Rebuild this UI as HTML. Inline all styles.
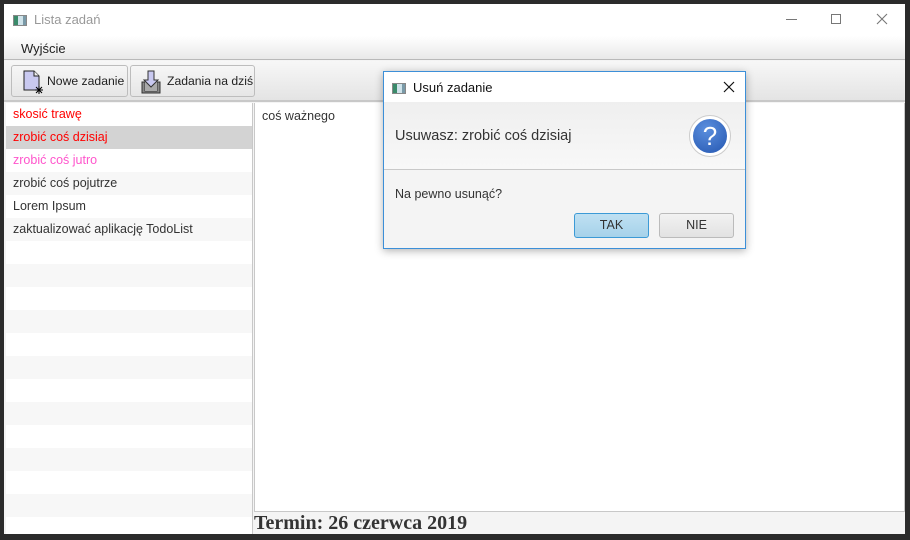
<!DOCTYPE html>
<html><head><meta charset="utf-8"><style>
*{margin:0;padding:0;box-sizing:border-box}
body{width:910px;height:540px;background:#2b2b2b;position:relative;overflow:hidden;font-family:"Liberation Sans",sans-serif;font-size:12.5px;color:#333;white-space:nowrap}
.abs{position:absolute}
.win{left:4px;top:4px;width:901px;height:530px;background:#f4f4f4}
.tb{left:0;top:0;width:901px;height:32px;background:#fff}
.menu{left:0;top:32px;width:901px;height:24px;background:linear-gradient(#fff,#e9e9e9);border-bottom:1px solid #b9b9b9}
.tool{left:0;top:57px;width:901px;height:41px;background:linear-gradient(#f7f7f7,#e4e4e4);border-bottom:2px solid #c8c8c8}
.btn{top:4px;height:32px;border:1px solid #bdbdbd;border-radius:3px;background:linear-gradient(#f6f6f6,#e6e6e6);font-size:12.2px;color:#222;line-height:30px}
.row{left:0;width:246px;height:23px;line-height:23px;padding-left:7px;font-size:12.5px}
.ic{display:inline-block;width:14px;height:11px;background:linear-gradient(90deg,#3a8a6a 0 35%,#cfe3ea 35% 75%,#7a9aa8 75%);border:1px solid #888;vertical-align:middle}
</style></head><body>
<div class="abs win">
 <div class="abs tb">
  <div class="abs" style="left:9px;top:9px"><span class="ic"></span></div>
  <div class="abs" style="left:30px;top:8px;color:#999;font-size:13px">Lista zadań</div>
  <div class="abs" style="left:782px;top:15px;width:11px;height:1px;background:#777"></div>
  <div class="abs" style="left:827px;top:10px;width:10px;height:10px;border:1px solid #777"></div>
  <svg class="abs" style="left:872px;top:9px" width="12" height="12"><path d="M1 1L11 11M11 1L1 11" stroke="#777" stroke-width="1.1"/></svg>
 </div>
 <div class="abs menu"><div class="abs" style="left:17px;top:5px;font-size:13px;color:#222">Wyjście</div></div>
 <div class="abs tool">
  <div class="abs btn" style="left:7px;width:117px">
   <svg class="abs" style="left:10px;top:4px" width="22" height="24"><path d="M2 1H12L17 6V20H2Z" fill="#c9c9f0" stroke="#222"/><path d="M12 1V6H17" fill="#eee" stroke="#222"/><path d="M17 16V24M13 20H21M14 17L20 23M20 17L14 23" stroke="#000"/></svg>
   <span class="abs" style="left:35px;top:0">Nowe zadanie</span></div>
  <div class="abs btn" style="left:126px;width:125px">
   <svg class="abs" style="left:9px;top:4px" width="22" height="24"><path d="M2 12H5V21H17V12H20V23H2Z" fill="#888" stroke="#333"/><path d="M5 12H17V21H5Z" fill="#aaa"/><path d="M8 1H14V10H18L11 17L4 10H8Z" fill="#c9c9f0" stroke="#333"/></svg>
   <span class="abs" style="left:36px;top:0">Zadania na dziś</span></div>
 </div>
 <div class="abs" style="left:2px;top:99px;width:247px;height:431px;background:#fff;border-right:1px solid #c8c8c8;overflow:hidden">
  <div class="abs row" style="top:0;color:#f00;background:#fff">skosić trawę</div>
  <div class="abs row" style="top:23px;color:#f00;background:#d3d3d3">zrobić coś dzisiaj</div>
  <div class="abs row" style="top:46px;color:#ff55cc;background:#fff">zrobić coś jutro</div>
  <div class="abs row" style="top:69px;background:#f7f7f7">zrobić coś pojutrze</div>
  <div class="abs row" style="top:92px">Lorem Ipsum</div>
  <div class="abs row" style="top:115px;background:#f7f7f7">zaktualizować aplikację TodoList</div>
  <div class="abs row" style="top:161px;background:#f7f7f7"></div>
  <div class="abs row" style="top:207px;background:#f7f7f7"></div>
  <div class="abs row" style="top:253px;background:#f7f7f7"></div>
  <div class="abs row" style="top:299px;background:#f7f7f7"></div>
  <div class="abs row" style="top:345px;background:#f7f7f7"></div>
  <div class="abs row" style="top:391px;background:#f7f7f7"></div>
 </div>
 <div class="abs" style="left:250px;top:99px;width:651px;height:409px;background:#fff;border:1px solid #c8c8c8;border-top:none">
  <div class="abs" style="left:7px;top:6px">coś ważnego</div>
 </div>
 <div class="abs" style="left:250px;top:508px;font-family:'Liberation Serif',serif;font-weight:bold;font-size:20px;color:#333;line-height:22px">Termin: 26 czerwca 2019</div>
</div>
<div class="abs" style="left:383px;top:71px;width:363px;height:178px;border:1px solid #3c8fd8;background:#f4f4f4;box-shadow:0 2px 8px rgba(0,0,0,.3)">
 <div class="abs" style="left:0;top:0;width:361px;height:30px;background:#fff">
  <div class="abs" style="left:8px;top:9px"><span class="ic"></span></div>
  <div class="abs" style="left:29px;top:8px;font-size:13px;color:#111">Usuń zadanie</div>
  <svg class="abs" style="left:339px;top:9px" width="12" height="12"><path d="M1 1L11 11M11 1L1 11" stroke="#111" stroke-width="1.2"/></svg>
 </div>
 <div class="abs" style="left:0;top:30px;width:361px;height:68px;background:linear-gradient(#efefef,#f8f8f8);border-bottom:1px solid #c9c9c9">
  <div class="abs" style="left:11px;top:26px;font-size:14.5px;color:#333">Usuwasz: zrobić coś dzisiaj</div>
  <div class="abs" style="left:305px;top:13px;width:42px;height:42px;border-radius:50%;background:#fff;border:1px solid #ccc"></div>
  <div class="abs" style="left:309px;top:17px;width:34px;height:34px;border-radius:50%;background:radial-gradient(circle at 40% 30%,#5b8fde,#2456b0);color:#fff;font-size:26px;text-align:center;line-height:34px">?</div>
 </div>
 <div class="abs" style="left:11px;top:115px;font-size:12.5px;color:#333">Na pewno usunąć?</div>
 <div class="abs" style="left:190px;top:141px;width:75px;height:25px;border:1px solid #3c9ad6;border-radius:3px;background:linear-gradient(#bfe0f2,#a6d2ea);text-align:center;line-height:23px;color:#333">TAK</div>
 <div class="abs" style="left:275px;top:141px;width:75px;height:25px;border:1px solid #bbb;border-radius:3px;background:linear-gradient(#f2f2f2,#e2e2e2);text-align:center;line-height:23px;color:#333">NIE</div>
</div>
</body></html>
